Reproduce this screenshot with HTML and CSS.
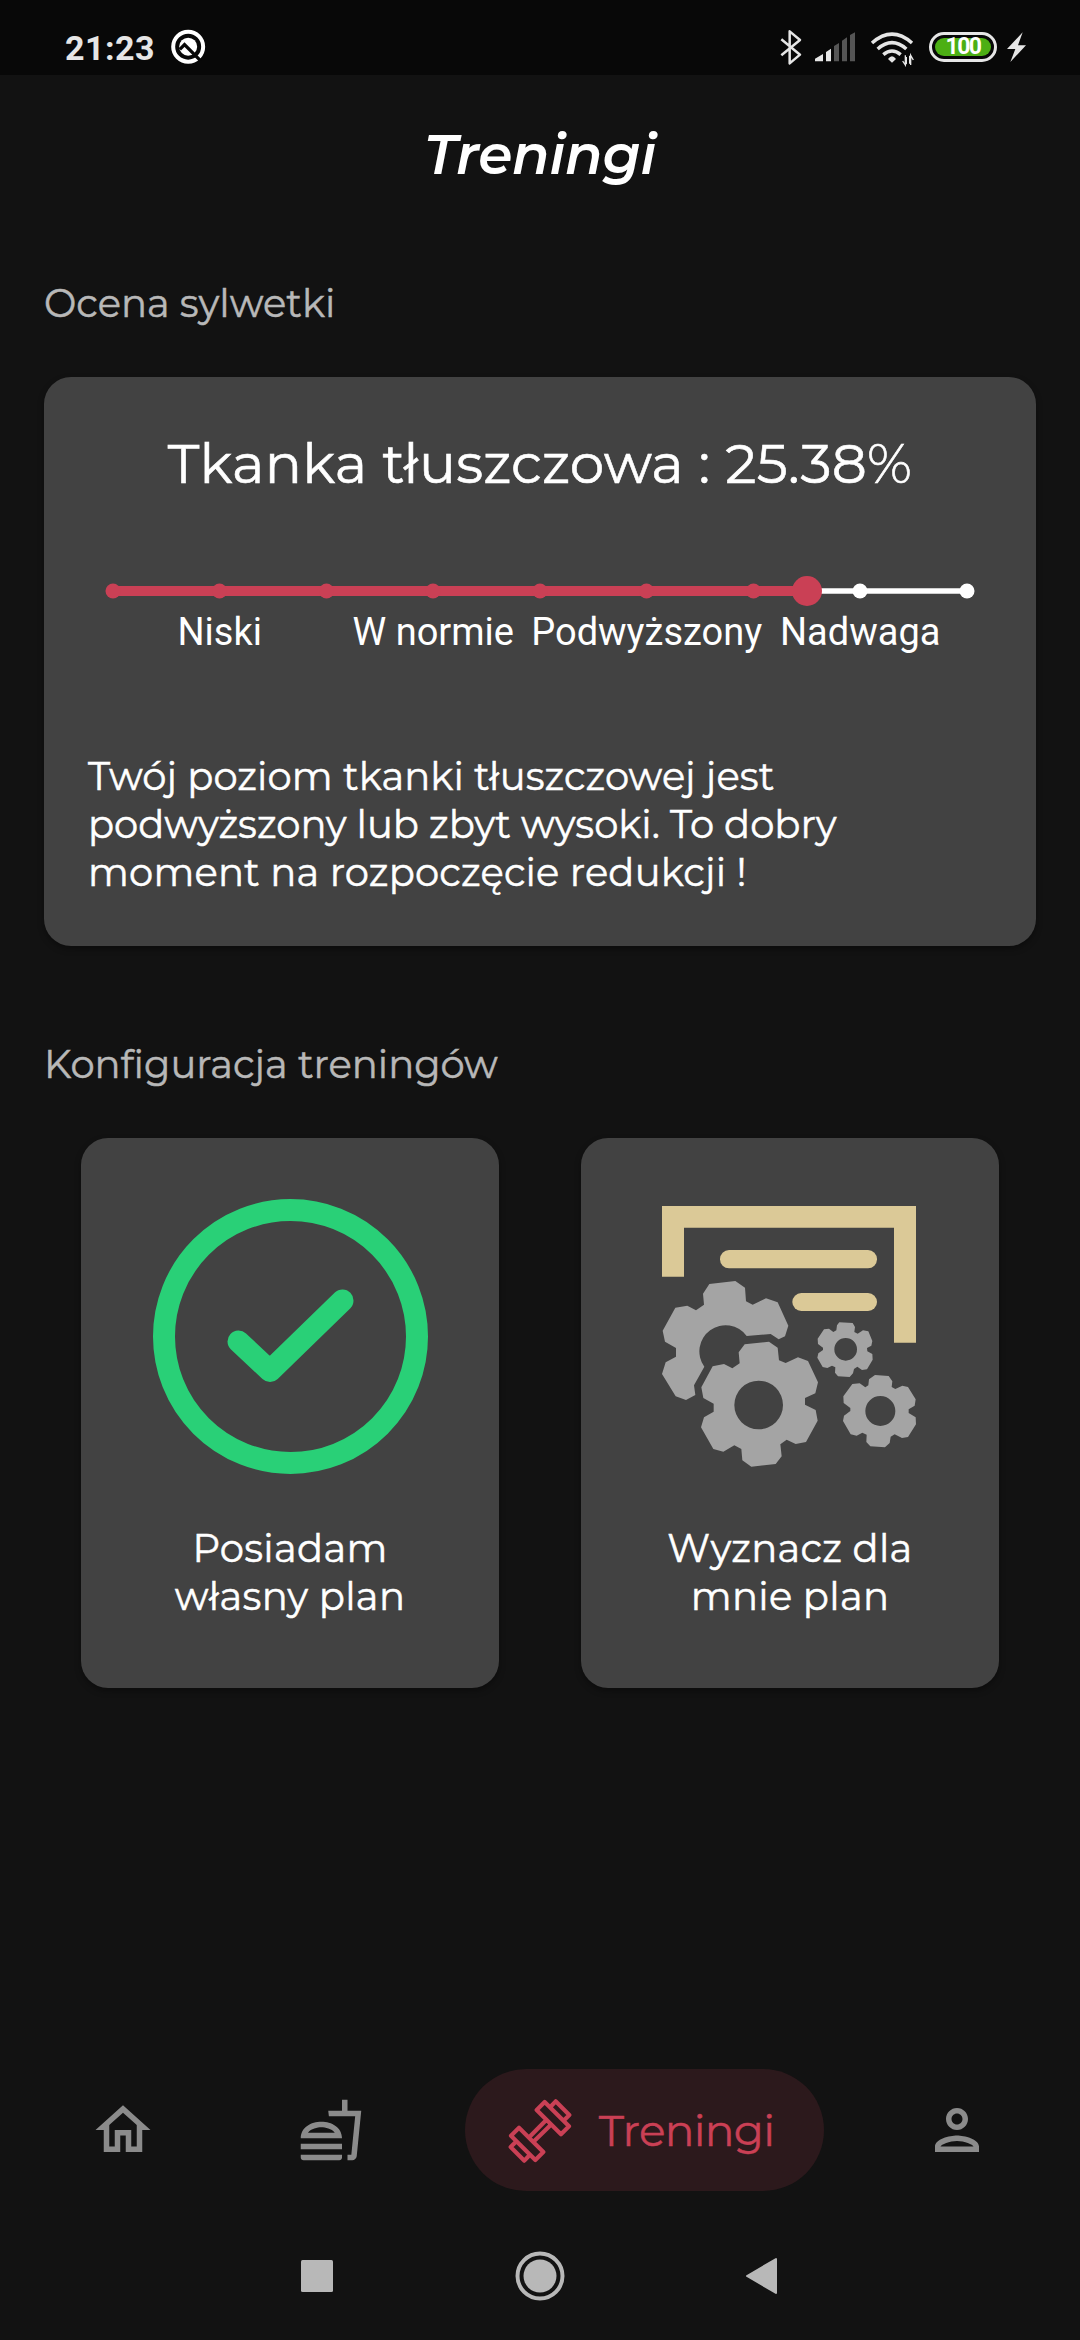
FILE: index.html
```html
<!DOCTYPE html>
<html lang="pl">
<head>
<meta charset="utf-8">
<title>Treningi</title>
<link rel="stylesheet" href="styles.css">
</head>
<body>
<div class="screen">
  <header class="status">
    <span class="clock">21:23</span>
    <svg class="badge" viewBox="48 39 104 112" width="35" height="37.3">
      <circle cx="99" cy="95" r="45" fill="none" stroke="#fff" stroke-width="12"/>
      <circle cx="99" cy="95" r="27" fill="#fff"/>
      <path d="M74 103L88 89L136 137" fill="none" stroke="#080808" stroke-width="10"/>
    </svg>
    <div class="indicators">
      <svg viewBox="57 80 72 120" width="24" height="40"><path d="M64 117L120 163L89 189V93L120 119L64 165" fill="none" stroke="#e6e6e6" stroke-width="7.5" stroke-linejoin="round"/></svg>
      <svg class="signal" viewBox="162 80 126 120" width="42" height="40">
        <path d="M165 183V175L189 161V183ZM198 183V155L213 145V183Z" fill="#e6e6e6"/>
        <path d="M222 183V137L237 128V183ZM246 183V121L261 111V183ZM270 183V104L285 96V183Z" fill="#555"/>
      </svg>
      <svg class="wifi" viewBox="330 80 132 120" width="44" height="40">
        <g fill="none" stroke="#e6e6e6" stroke-width="10.5"><path d="M336 128Q396 75 456 128"/><path d="M353 146Q396 108 439 146"/><path d="M370 163Q396 141 422 163"/></g>
        <path d="M384 176Q396 160 408 176L396 187Z" fill="#e6e6e6"/>
        <path d="M436 165V194L428 182M452 194V165L460 179M439 192V170M449 190V166" fill="none" stroke="#e6e6e6" stroke-width="4"/>
      </svg>
      <span class="battery"><span class="level">100</span></span>
      <svg class="bolt" viewBox="738 80 63 120" width="21" height="40"><path d="M788 96L741 146H766L751 185L798 135H774Z" fill="#e6e6e6"/></svg>
    </div>
  </header>

  <main class="content">
    <h1 class="title">Treningi</h1>

    <h2 class="section">Ocena sylwetki</h2>
    <section class="card summary">
      <p class="result">Tkanka tłuszczowa : 25.38<span class="percent">%</span></p>
      <svg class="slider" viewBox="0 0 992 40" width="992" height="40">
        <path d="M763 20H923" stroke="#fff" stroke-width="5.5"/>
        <circle cx="816" cy="20" r="7.5" fill="#fff"/><circle cx="923" cy="20" r="7.5" fill="#fff"/>
        <g fill="#ca4055"><path d="M69 15H763V25H69Z"/><circle cx="69" cy="20" r="7.5"/><circle cx="175.5" cy="20" r="7.5"/><circle cx="282.5" cy="20" r="7.5"/><circle cx="389" cy="20" r="7.5"/><circle cx="496" cy="20" r="7.5"/><circle cx="602.5" cy="20" r="7.5"/><circle cx="709.5" cy="20" r="7.5"/><circle cx="763" cy="20" r="15"/></g>
      </svg>
      <div class="scale">
        <span>Niski</span><span>W normie</span><span>Podwyższony</span><span>Nadwaga</span>
      </div>
      <p class="advice"><span class="line-1">Twój poziom tkanki tłuszczowej jest</span><br>podwyższony lub zbyt wysoki. To dobry<br><span class="line-3">moment na rozpoczęcie redukcji !</span></p>
    </section>

    <h2 class="section plan-section">Konfiguracja treningów</h2>
    <div class="options">
      <section class="card option">
        <svg viewBox="0 0 275 275" width="275" height="275" fill="none" stroke="#29d077" stroke-width="22" stroke-linecap="round" stroke-linejoin="round"><circle cx="137.5" cy="137.5" r="126.5"/><path d="M85.500 142.500L117 172L189.500 101.500"/></svg>
        <p class="label">Posiadam<br>własny plan</p>
      </section>
      <section class="card option">
        <svg viewBox="0 57 900 825" width="300" height="275">
          <g fill="#dbc997"><path d="M66 78H828V488H762V143H132V290H66Z"/><rect x="240" y="210" width="471" height="55" rx="27"/><rect x="457" y="339" width="254" height="54" rx="27"/></g>
          <g fill="#a4a4a4" fill-rule="evenodd">
            <path d="M208 312L286 303L315 323L318 364L338 374L378 355L413 367L445 437L435 469L416 478L392 462L320 468A78 78 0 1 0 193 560L162 616L166 645L138 660L107 649L66 582L77 547L108 530V504L75 485L68 452L106 383L142 377L168 391L192 374L189 341Z"/>
            <path d="M314 493L387 485L413 503L417 541L437 549L474 532L504 543L534 607L526 640L495 654V674L527 690L533 722L498 786L467 792L440 779L421 793L425 829L407 852L334 860L307 841L304 807L283 796L250 815L220 807L183 742L192 712L221 695V671L190 654L184 622L218 559L252 552L277 565L299 550L296 517ZM429 675A73 73 0 1 0 283 675A73 73 0 1 0 429 675Z"/>
            <path d="M598 427L638 429L645 441L643 456L653 461L669 451L685 454L697 483L694 497L681 504L682 514L697 522L698 539L681 568L666 570L652 560L642 567L639 580L629 591L594 589L585 578L586 562L576 557L562 564L548 561L532 533L535 520L549 510V503L534 492L533 476L552 448L567 446L580 456L589 451L591 436ZM651 508A34 34 0 1 0 583 508A34 34 0 1 0 651 508Z"/>
            <path d="M705 585L746 588L757 604L755 621L766 627L787 617L804 621L827 658L824 677L806 688V699L827 712L828 733L804 771L786 774L764 763L752 770L749 789L735 802L691 799L679 786L680 764L667 758L650 767L632 763L609 723L612 707L631 693V684L611 669L610 649L637 612L659 610L676 622L685 616L687 598ZM766 693A45 45 0 1 0 676 693A45 45 0 1 0 766 693Z"/>
          </g>
        </svg>
        <p class="label">Wyznacz dla<br>mnie plan</p>
      </section>
    </div>
  </main>

  <nav class="tabs">
    <a class="tab"><svg viewBox="0 0 24 24" width="66" height="66" fill="#8b8b8b"><path d="M12 5.690l5 4.500V18h-2v-6H9v6H7v-7.810l5-4.500M12 3L2 12h3v8h6v-6h2v6h6v-8h3L12 3z"/></svg></a>
    <a class="tab"><svg viewBox="0 0 24 24" width="66" height="66" fill="#8b8b8b"><path d="M1 21.980c0 .560.450 1.010 1.010 1.010H15c.560 0 1.010-.450 1.010-1.010V21H1v.980zM8.500 8.990C4.750 8.990 1 11 1 15h15c0-4-3.750-6.010-7.500-6.010zM3.620 13c1.110-1.550 3.470-2.010 4.880-2.010s3.770.460 4.880 2.010H3.620zM1 17h15v2H1zM18 5V1h-2v4h-5l.230 2h9.560l-1.400 14H18v2h1.720c.840 0 1.530-.650 1.630-1.470L23 5h-5z"/></svg></a>
    <a class="tab active">
      <svg viewBox="45 45 204 204" width="68" height="68" fill="none" stroke="#ca4055" stroke-width="12.500" stroke-linejoin="round"><path d="M210 160L234 136L161 63L137 87ZM178 78L194 61L235 102L220 117M165 118L116 167M179 132L129 181M84 140L60 164L133 237L157 213ZM116 222L100 239L59 198L74 183"/></svg>
      <span>Treningi</span>
    </a>
    <a class="tab"><svg viewBox="0 0 24 24" width="66" height="66" fill="#8b8b8b"><path d="M12 6c1.100 0 2 .9 2 2s-.9 2-2 2-2-.9-2-2 .9-2 2-2m0 10c2.700 0 5.800 1.290 6 2H6c.230-.720 3.310-2 6-2m0-12C9.790 4 8 5.790 8 8s1.790 4 4 4 4-1.790 4-4-1.790-4-4-4zm0 10c-2.670 0-8 1.340-8 4v2h16v-2c0-2.660-5.330-4-8-4z"/></svg></a>
  </nav>
  <div class="system">
    <svg viewBox="0 0 50 50" width="50" height="50"><rect x="9" y="9" width="32" height="32" rx="1.500" fill="#b8b8b8"/></svg>
    <svg viewBox="0 0 50 50" width="50" height="50"><circle cx="25" cy="25" r="22.500" fill="none" stroke="#b8b8b8" stroke-width="4"/><circle cx="25" cy="25" r="16.500" fill="#b8b8b8"/></svg>
    <svg viewBox="0 0 50 50" width="50" height="50"><path d="M8 25L37 8V42Z" fill="#b8b8b8" stroke="#b8b8b8" stroke-width="2" stroke-linejoin="round"/></svg>
  </div>
</div>
</body>
</html>
```
FILE: styles.css
```css
* { box-sizing: border-box; }
body, h1, h2, p { margin: 0; font-weight: 400; }
body { background: #121212; color: #fff; font-family: Montserrat, Inter, "Open Sans", sans-serif; }
svg { display: block; flex: none; }

.screen { display: flex; flex-direction: column; width: 1080px; height: 2340px; overflow: hidden; }

/* Status bar */
.status { display: flex; align-items: flex-start; height: 75px; padding: 27px 53px 0 65px; background: #080808; color: #e6e6e6; }
.clock { font: 700 34px/42px Roboto, sans-serif; letter-spacing: .5px; }
.badge { margin: 1px 0 0 16px; }
.indicators { display: flex; margin-left: auto; }
.signal { margin-left: 11px; }
.wifi { margin-left: 14px; }
.battery { width: 68px; height: 30px; margin: 5px 1px 0 15px; padding: 3px; border: 3px solid #e6e6e6; border-radius: 15px; }
.level { display: flex; align-items: center; justify-content: center; height: 18px; border-radius: 9px; background: #4caf14; color: #fff; font: 700 23px/20px Roboto, sans-serif; letter-spacing: -1.5px; }
.bolt { margin-left: 8px; }

/* Headings */
.title { margin-top: 47px; font-size: 55px; line-height: 66px; font-weight: 600; font-style: italic; letter-spacing: -.3px; text-align: center; }
.section { margin: 92px 44px 49px; color: #b8b8b8; font-size: 38.5px; line-height: 48px; -webkit-text-stroke: .5px; }
.plan-section { margin-top: 95px; }

/* Body fat summary */
.card { background: #424242; border-radius: 27px; box-shadow: 0 3px 6px rgba(0, 0, 0, .35); }
.summary { height: 569px; margin: 0 44px; padding-top: 55px; }
.result { font-size: 55px; line-height: 64px; letter-spacing: .25px; text-align: center; -webkit-text-stroke: .6px; }
.percent { font-weight: 300; }
.slider { margin-top: 75px; }
.scale { display: grid; grid-template-columns: repeat(4, 213.5px); margin: -1px 0 0 69px; font: 38px/44px Roboto, sans-serif; }
.scale span { justify-self: center; white-space: nowrap; }
.advice { margin: 99px 0 0 44px; font-size: 38.5px; line-height: 48px; white-space: nowrap; -webkit-text-stroke: .5px; }
.line-1 { letter-spacing: .1px; }
.line-3 { letter-spacing: .2px; }

/* Plan choices */
.options { display: flex; gap: 82px; padding: 0 81px; }
.option { display: flex; flex-direction: column; align-items: center; width: 418px; height: 550px; padding-top: 61px; }
.label { margin-top: 51px; font-size: 38.5px; line-height: 48px; letter-spacing: .3px; text-align: center; -webkit-text-stroke: .5px; }

/* Bottom tabs */
.tabs { display: flex; justify-content: space-between; margin-top: auto; padding: 0 48px; }
.tab { display: flex; align-items: center; justify-content: center; width: 150px; height: 122px; }
.active { justify-content: flex-start; gap: 25px; width: 359px; padding-left: 41px; border-radius: 61px; background: #2c191c; color: #ca4055; font-size: 44px; letter-spacing: -.75px; -webkit-text-stroke: .4px; }

/* System navigation */
.system { display: grid; grid-template-columns: repeat(3, 223.5px); align-items: center; justify-content: center; justify-items: center; height: 129px; margin-top: 20px; }
```
